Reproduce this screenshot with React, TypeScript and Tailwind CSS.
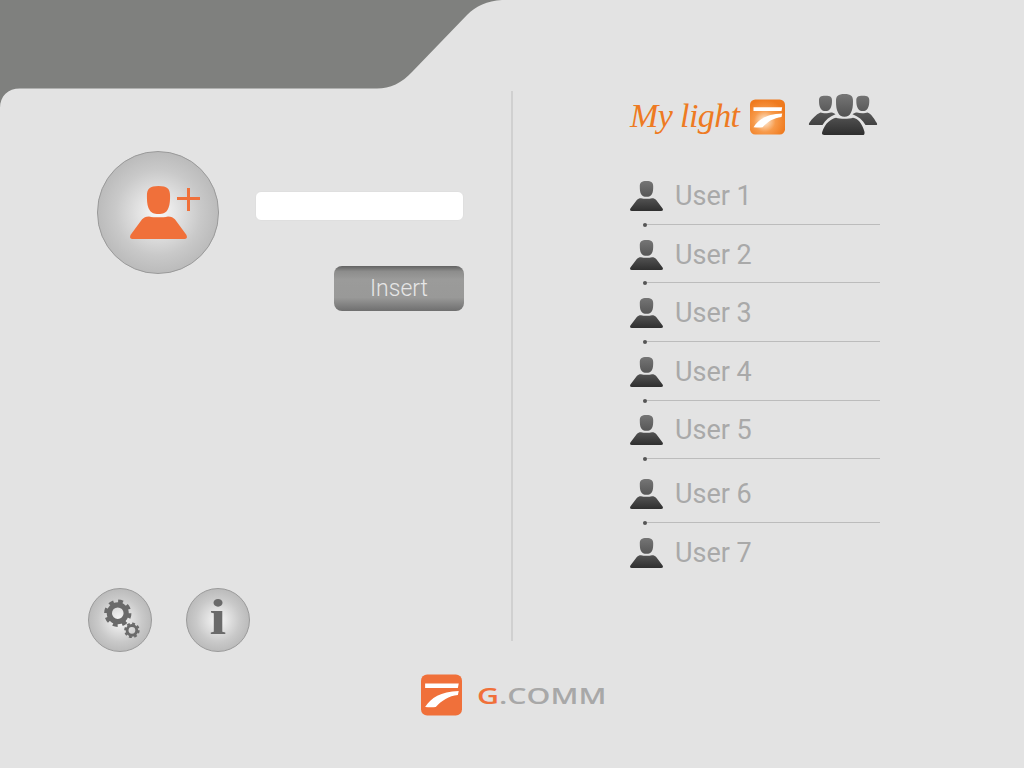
import React from "react";

const ORANGE = "#f0703a";
const HEAD =
  "M16.5 0C21.5 0 23.2 1.5 23.2 5.5C23.2 9 23 11 22 13C21 15.2 19 15.8 16.5 15.8C14 15.8 12 15.2 11 13C10 11 9.8 9 9.8 5.5C9.8 1.5 11.5 0 16.5 0Z";
const BODY =
  "M11 17.2C14 17.9 19 17.9 22 17.2C24 17.2 25 17.8 26 18.8L32.6 27.6Q33.8 30 31 30L2 30Q-0.8 30 0.4 27.6L7 18.8C8 17.8 9 17.2 11 17.2Z";

function Person({ className }: { className: string }) {
  return (
    <svg viewBox="0 0 33 30" preserveAspectRatio="none" className={className}>
      <path fill={ORANGE} d={HEAD} />
      <path fill={ORANGE} d={BODY} />
    </svg>
  );
}

function UserIcon({ id }: { id: string }) {
  return (
    <svg viewBox="0 0 33 30" className="h-[30px] w-[33px] shrink-0">
      <defs>
        <linearGradient id={id} gradientUnits="userSpaceOnUse" x1="0" y1="0" x2="0" y2="30">
          <stop offset="0" stopColor="#757575" />
          <stop offset="0.55" stopColor="#555555" />
          <stop offset="1" stopColor="#2f2f2f" />
        </linearGradient>
      </defs>
      <path fill={`url(#${id})`} d={HEAD} />
      <path fill={`url(#${id})`} d={BODY} />
    </svg>
  );
}

function GroupIcon() {
  return (
    <svg viewBox="0 0 70 41" className="h-[41px] w-[70px]">
      <defs>
        <linearGradient id="grp" gradientUnits="userSpaceOnUse" x1="0" y1="0" x2="0" y2="41">
          <stop offset="0" stopColor="#767676" />
          <stop offset="0.5" stopColor="#555555" />
          <stop offset="1" stopColor="#2e2e2e" />
        </linearGradient>
      </defs>
      <g fill="url(#grp)">
        <path d="M17.5 1.7C22.5 1.7 24 3 24 6.5C24 10 23.7 12 22.5 14.2C21.5 16.3 19.7 17 17.5 17C15.3 17 13.5 16.3 12.5 14.2C11.3 12 11 10 11 6.5C11 3 12.5 1.7 17.5 1.7Z" />
        <path d="M54.8 1.7C59.8 1.7 61.3 3 61.3 6.5C61.3 10 61 12 59.8 14.2C58.8 16.3 57 17 54.8 17C52.6 17 50.8 16.3 49.8 14.2C48.6 12 48.3 10 48.3 6.5C48.3 3 49.8 1.7 54.8 1.7Z" />
        <path d="M36.5 0C43 0 45 2 45 7C45 12.5 44.5 15.5 43 18.5C41.8 21.5 39.5 22.7 36.5 22.7C33.5 22.7 31.2 21.5 30 18.5C28.5 15.5 28 12.5 28 7C28 2 30 0 36.5 0Z" />
        <path d="M12.5 18.6C15 19.5 20 19.5 23 18.6C24.5 18.6 26 19.2 27.5 20.3C21.5 22.5 17.5 26 14.5 31L2 31Q0.2 31 1.2 29C4 25 8 20.5 12.5 18.6Z" />
        <path d="M59.5 18.6C57 19.5 52 19.5 49 18.6C47.5 18.6 46 19.2 44.5 20.3C50.5 22.5 54.5 26 57.5 31L68 31Q69.8 31 68.8 29C66 25 64 20.5 59.5 18.6Z" />
        <path d="M28 23.7C32 25 41 25 45 23.7C50 24.6 54 29 56.4 37.4Q57.2 41 54.5 41L16.5 41Q13.2 41 14.2 38C17 29 23 24.8 28 23.7Z" />
      </g>
    </svg>
  );
}

function BrandMark({ className, id, glow }: { className: string; id: string; glow: boolean }) {
  return (
    <svg viewBox="0 0 100 100" className={className}>
      <defs>
        <radialGradient id={id} cx="0.42" cy="0.62" r="0.62">
          <stop offset="0" stopColor={glow ? "#fdf0e0" : ORANGE} />
          <stop offset="0.5" stopColor={glow ? "#f79a4a" : ORANGE} />
          <stop offset="1" stopColor={glow ? "#ef7a1e" : ORANGE} />
        </radialGradient>
      </defs>
      <rect width="100" height="100" rx="15" fill={`url(#${id})`} />
      <path fill="#ffffff" d="M10 22H92L90 33H10Z" />
      <path fill="#ffffff" d="M10 79C25 56 47 42 92 40L90 50C68 52 50 64 36 79C28 81 18 80 10 79Z" />
    </svg>
  );
}

function Gears() {
  return (
    <svg viewBox="0 0 64 64" className="h-[62px] w-[62px]">
      <circle cx="29.7" cy="25" r="8.7" fill="none" stroke="#6a6a6a" strokeWidth="5.4" />
      <circle cx="29.7" cy="25" r="12.3" fill="none" stroke="#6a6a6a" strokeWidth="3.6" strokeDasharray="5 4.66" />
      <circle cx="44.3" cy="42.7" r="5" fill="none" stroke="#6a6a6a" strokeWidth="3" />
      <circle cx="44.3" cy="42.7" r="7" fill="none" stroke="#6a6a6a" strokeWidth="2" strokeDasharray="3 2.5" />
    </svg>
  );
}

const users = [
  { name: "User 1", gap: "mb-[15px]", line: "mt-[13px]" },
  { name: "User 2", gap: "mb-[15px]", line: "mt-[12px]" },
  { name: "User 3", gap: "mb-[15px]", line: "mt-[13px]" },
  { name: "User 4", gap: "mb-[14px]", line: "mt-[13px]" },
  { name: "User 5", gap: "mb-[20px]", line: "mt-[13px]" },
  { name: "User 6", gap: "mb-[15px]", line: "mt-[13px]" },
  { name: "User 7", gap: "", line: "" },
];

const ball =
  "rounded-full border border-[#9a9a9a] bg-[radial-gradient(circle,#f9f9f9_0%,#c9c9c9_50%,#a8a8a8_100%)]";

export default function App() {
  return (
    <div className="relative flex h-[768px] w-[1024px] flex-col overflow-hidden bg-[#e3e3e3] font-['Liberation_Sans',sans-serif]">
      <svg viewBox="0 0 512 110" className="absolute left-0 top-0 h-[110px] w-[512px]">
        <path
          fill="#7f807e"
          d="M0 0H502C487 1 476 6 467 15L412 72C402 83 390 88.5 377 88.5H20C8 88.5 0 96 0 108Z"
        />
      </svg>

      <main className="relative flex h-[674px] pt-[91px]">
        <section className="flex h-[561px] w-[511px] flex-col justify-between">
          <div className="flex gap-[36px] pl-[97px] pt-[60px]">
            <div className={`flex h-[123px] w-[122px] items-center justify-center ${ball}`}>
              <div className="relative ml-[13px] h-[53px] w-[71px]">
                <Person className="absolute left-[1px] top-0 h-[53px] w-[57px]" />
                <span className="absolute left-[48px] top-[11px] h-[3px] w-[23px] bg-[#f0703a]" />
                <span className="absolute left-[58px] top-[2px] h-[23px] w-[3px] bg-[#f0703a]" />
              </div>
            </div>
            <div className="flex w-[209px] flex-col pt-[40px]">
              <input
                aria-label="Name"
                className="h-[30px] w-full rounded-md border border-[#dfdfdf] bg-white"
              />
              <button className="mt-[45px] h-[45px] w-[130px] self-end rounded-lg bg-[linear-gradient(#626262_0%,#8d8d8c_12%,#9b9b9a_30%,#999998_70%,#7a7a7a_92%,#6f6f6f_100%)] pt-[2px] font-['Roboto',sans-serif] text-[23px] font-light text-[#e6e6e6]">
                Insert
              </button>
            </div>
          </div>
          <div className="flex gap-[34px] pl-[88px]">
            <div className={`h-16 w-16 ${ball}`}>
              <Gears />
            </div>
            <div className={`flex h-16 w-16 items-center justify-center pb-[7px] ${ball}`}>
              <span className="scale-x-[1.2] font-['Liberation_Serif',serif] text-[50px] font-bold leading-none text-[#6a6a6a]">
                i
              </span>
            </div>
          </div>
        </section>

        <div className="h-[550px] w-[2px] bg-[#d0d0d0]" />

        <section className="ml-[117px] w-[250px] pt-[3px]">
          <div className="flex h-[41px] items-center">
            <span className="w-[120px] whitespace-nowrap pt-[3px] font-['Liberation_Serif',serif] text-[34px] italic leading-none tracking-[-0.6px] text-[#ee7a22]">
              My light
            </span>
            <BrandMark id="brandGlow" glow className="mt-[5px] h-[36px] w-[35px]" />
            <span className="ml-[23px]">
              <GroupIcon />
            </span>
          </div>
          <ul className="mt-[46px]">
            {users.map((u, i) => (
              <li key={u.name} className={u.gap}>
                <div className="flex h-[30px] items-center gap-[12px]">
                  <UserIcon id={`u${i}`} />
                  <span className="font-['Roboto',sans-serif] text-[27px] font-normal leading-none text-[#a9a9a9]">
                    {u.name}
                  </span>
                </div>
                {i < users.length - 1 && (
                  <div className={`ml-[13px] flex h-px w-[237px] items-center bg-[#bcbcbc] ${u.line}`}>
                    <span className="h-[4px] w-[4px] rounded-full bg-[#555555]" />
                  </div>
                )}
              </li>
            ))}
          </ul>
        </section>
      </main>

      <footer className="flex items-center justify-center">
        <BrandMark id="brandFlat" glow={false} className="h-[42px] w-[41px]" />
        <span className="ml-[15px] flex h-[42px] w-[127px] items-center whitespace-nowrap font-['Open_Sans',sans-serif] text-[22px] font-semibold leading-none text-[#a8a8a8]">
          <span className="origin-left scale-x-[1.38]">
            <span className="text-[#f0703a]">G</span>.COMM
          </span>
        </span>
      </footer>
    </div>
  );
}
